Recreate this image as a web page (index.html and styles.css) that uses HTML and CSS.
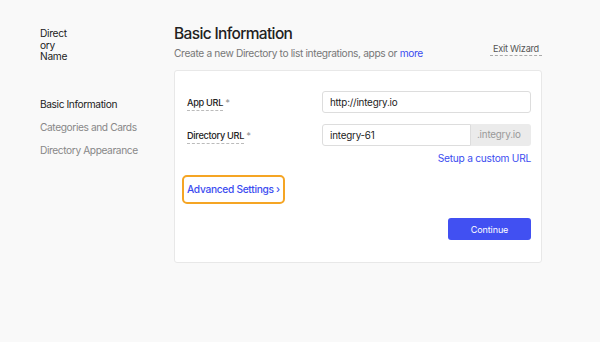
FILE: index.html
```html
<!DOCTYPE html>
<html lang="en">
<head>
    <meta charset="UTF-8">
    <meta name="viewport" content="width=device-width, initial-scale=1.0">
    <title>Directory Wizard</title>
    <link rel="stylesheet" href="styles.css">
</head>
<body>
    <div class="page">
        <aside class="sidebar">
            <div class="dir-name">Directory Name</div>
            <ul class="steps">
                <li class="active">Basic Information</li>
                <li>Categories and Cards</li>
                <li>Directory Appearance</li>
            </ul>
        </aside>

        <main class="main">
            <div class="header">
                <div>
                    <h1>Basic Information</h1>
                    <p class="subtitle">Create a new Directory to list integrations, apps or <a href="#">more</a></p>
                </div>
                <a class="exit" href="#">Exit Wizard</a>
            </div>

            <div class="card">
                <div class="form-row">
                    <label><span class="label-text">App URL</span> <span class="req">*</span></label>
                    <div class="field">
                        <input type="text" value="http://integry.io">
                    </div>
                </div>

                <div class="form-row">
                    <label><span class="label-text">Directory URL</span> <span class="req">*</span></label>
                    <div class="field">
                        <div class="input-group">
                            <input type="text" value="integry-61">
                            <span class="addon">.integry.io</span>
                        </div>
                    </div>
                </div>

                <div class="custom-url"><a href="#">Setup a custom URL</a></div>

                <a class="advanced" href="#">Advanced Settings ›</a>

                <div class="actions">
                    <button>Continue</button>
                </div>
            </div>
        </main>
    </div>
</body>
</html>
```

FILE: styles.css
```css
* {
    margin: 0;
    padding: 0;
    box-sizing: border-box;
    font-family: Inter, "Noto Sans", sans-serif;
}

body {
    background-color: #f9f9f9;
    color: #222;
}

a {
    color: #3b4cf0;
    text-decoration: none;
}

.page {
    display: flex;
    padding: 24px 0 0 40px;
}

.sidebar {
    width: 134px;
    flex-shrink: 0;
}

.dir-name {
    width: 31px;
    margin-top: 4px;
    font-size: 10.2px;
    line-height: 11.5px;
    letter-spacing: -0.3px;
    overflow-wrap: anywhere;
    color: #222;
}

.steps {
    list-style: none;
    margin-top: 35px;
}

.steps li {
    font-size: 10.2px;
    line-height: 13px;
    letter-spacing: -0.4px;
    margin-bottom: 10px;
    color: #888;
}

.steps li.active {
    color: #222;
}

.main {
    width: 368px;
}

.header {
    display: flex;
    justify-content: space-between;
    align-items: flex-end;
    margin-bottom: 10px;
}

h1 {
    font-size: 15.5px;
    font-weight: 500;
    line-height: 20px;
    letter-spacing: -0.65px;
    color: #222;
}

.subtitle {
    font-size: 10.2px;
    line-height: 14px;
    letter-spacing: -0.35px;
    margin-top: 2px;
    color: #777;
}

.exit {
    font-size: 9.2px;
    letter-spacing: -0.25px;
    color: #555;
    padding: 0 3px 1px;
    margin-bottom: 4px;
    border-bottom: 1px dashed #aaa;
}

.card {
    background-color: white;
    border: 1px solid #e8e8e8;
    border-radius: 3px;
    padding: 20px 10px 22px 12px;
}

.form-row {
    display: flex;
    align-items: center;
    margin-bottom: 11px;
}

.form-row label {
    width: 135px;
    font-size: 9.2px;
    font-weight: 500;
    letter-spacing: -0.3px;
    color: #222;
}

.label-text {
    border-bottom: 1px dashed #bbb;
    padding-bottom: 2px;
}

.req {
    color: #999;
}

.field {
    flex: 1;
}

input {
    display: block;
    width: 100%;
    height: 22px;
    padding: 0 7px;
    font-size: 9.8px;
    letter-spacing: -0.2px;
    color: #222;
    border: 1px solid #ddd;
    border-radius: 3px;
    outline: none;
}

.input-group {
    display: flex;
}

.input-group input {
    border-radius: 3px 0 0 3px;
}

.addon {
    width: 60px;
    flex-shrink: 0;
    height: 22px;
    line-height: 22px;
    padding-left: 6px;
    font-size: 9.8px;
    letter-spacing: -0.2px;
    color: #999;
    background-color: #ebebeb;
    border-radius: 0 3px 3px 0;
}

.custom-url {
    text-align: right;
    font-size: 10.2px;
    line-height: 13px;
    letter-spacing: -0.25px;
    margin-top: -5px;
}

.advanced {
    display: inline-block;
    margin: 10px 0 0 -5px;
    padding: 6px 3px;
    font-size: 10.2px;
    line-height: 13px;
    letter-spacing: -0.3px;
    font-weight: 500;
    border: 2px solid #f5a524;
    border-radius: 5px;
}

.actions {
    display: flex;
    justify-content: flex-end;
    margin-top: 14px;
}

button {
    display: block;
    width: 83px;
    height: 22px;
    font-size: 9px;
    letter-spacing: -0.1px;
    color: white;
    background-color: #4150f2;
    border: none;
    border-radius: 3px;
    cursor: pointer;
}
```
